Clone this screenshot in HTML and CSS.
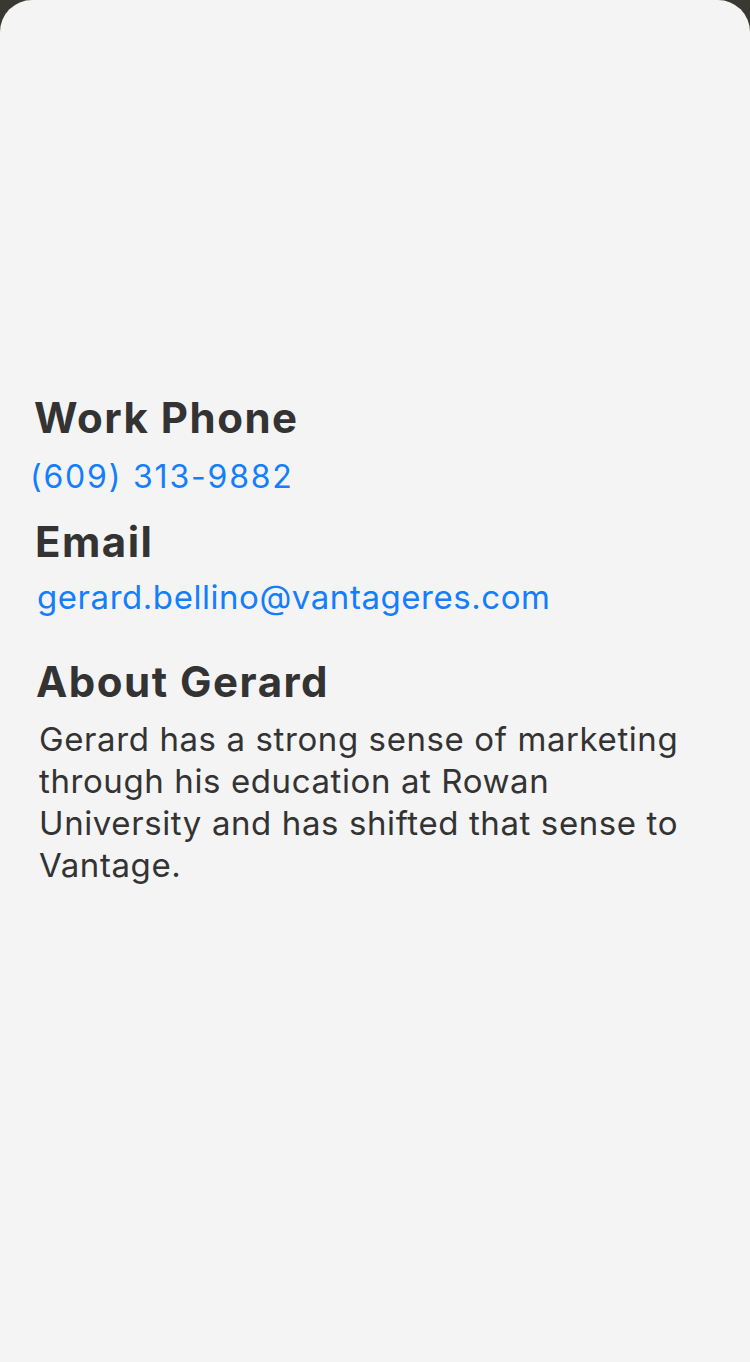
FILE: index.html
```html
<!DOCTYPE html>
<html>
<head>
<meta charset="utf-8">
<link rel="stylesheet" href="styles.css">
</head>
<body>
<div class="sheet">
  <section class="field phone-field">
    <h2 class="label label-phone">Work Phone</h2>
    <a class="link link-phone">(609) 313-9882</a>
  </section>
  <section class="field email-field">
    <h2 class="label label-email">Email</h2>
    <a class="link link-email">gerard.bellino@vantageres.com</a>
  </section>
  <section class="field about-field">
    <h2 class="label label-about">About Gerard</h2>
    <p class="about">Gerard has a strong sense of marketing through his education at Rowan University and has shifted that sense to Vantage.</p>
  </section>
</div>
</body>
</html>
```
FILE: styles.css
```css
html, body {
  margin: 0;
  padding: 0;
  background: #3a3833;
}
.sheet {
  height: 1362px;
  box-sizing: border-box;
  background: #f4f4f4;
  border-radius: 32px 32px 0 0;
  padding-top: 392px;
  font-family: Inter, "Noto Sans", sans-serif;
  color: #333333;
}
.field {
  display: flex;
  flex-direction: column;
  align-items: flex-start;
}
.label {
  margin: 0;
  font-size: 42px;
  font-weight: 700;
  line-height: 52px;
  letter-spacing: 1.5px;
}
.link {
  color: #147efb;
  font-size: 33px;
  line-height: 44px;
}
.label-phone { margin-left: 34px; }
.link-phone {
  margin: 11px 0 0 30px;
  font-size: 32px;
  letter-spacing: 1.8px;
}
.email-field { margin-top: 17px; }
.label-email { margin-left: 35px; }
.link-email {
  margin: 7px 0 0 37px;
  letter-spacing: 0.55px;
}
.about-field { margin-top: 37px; }
.label-about { margin-left: 36px; }
.about {
  margin: 10px 0 0 39px;
  width: 650px;
  font-size: 33px;
  line-height: 42px;
  letter-spacing: 0.6px;
}
```
